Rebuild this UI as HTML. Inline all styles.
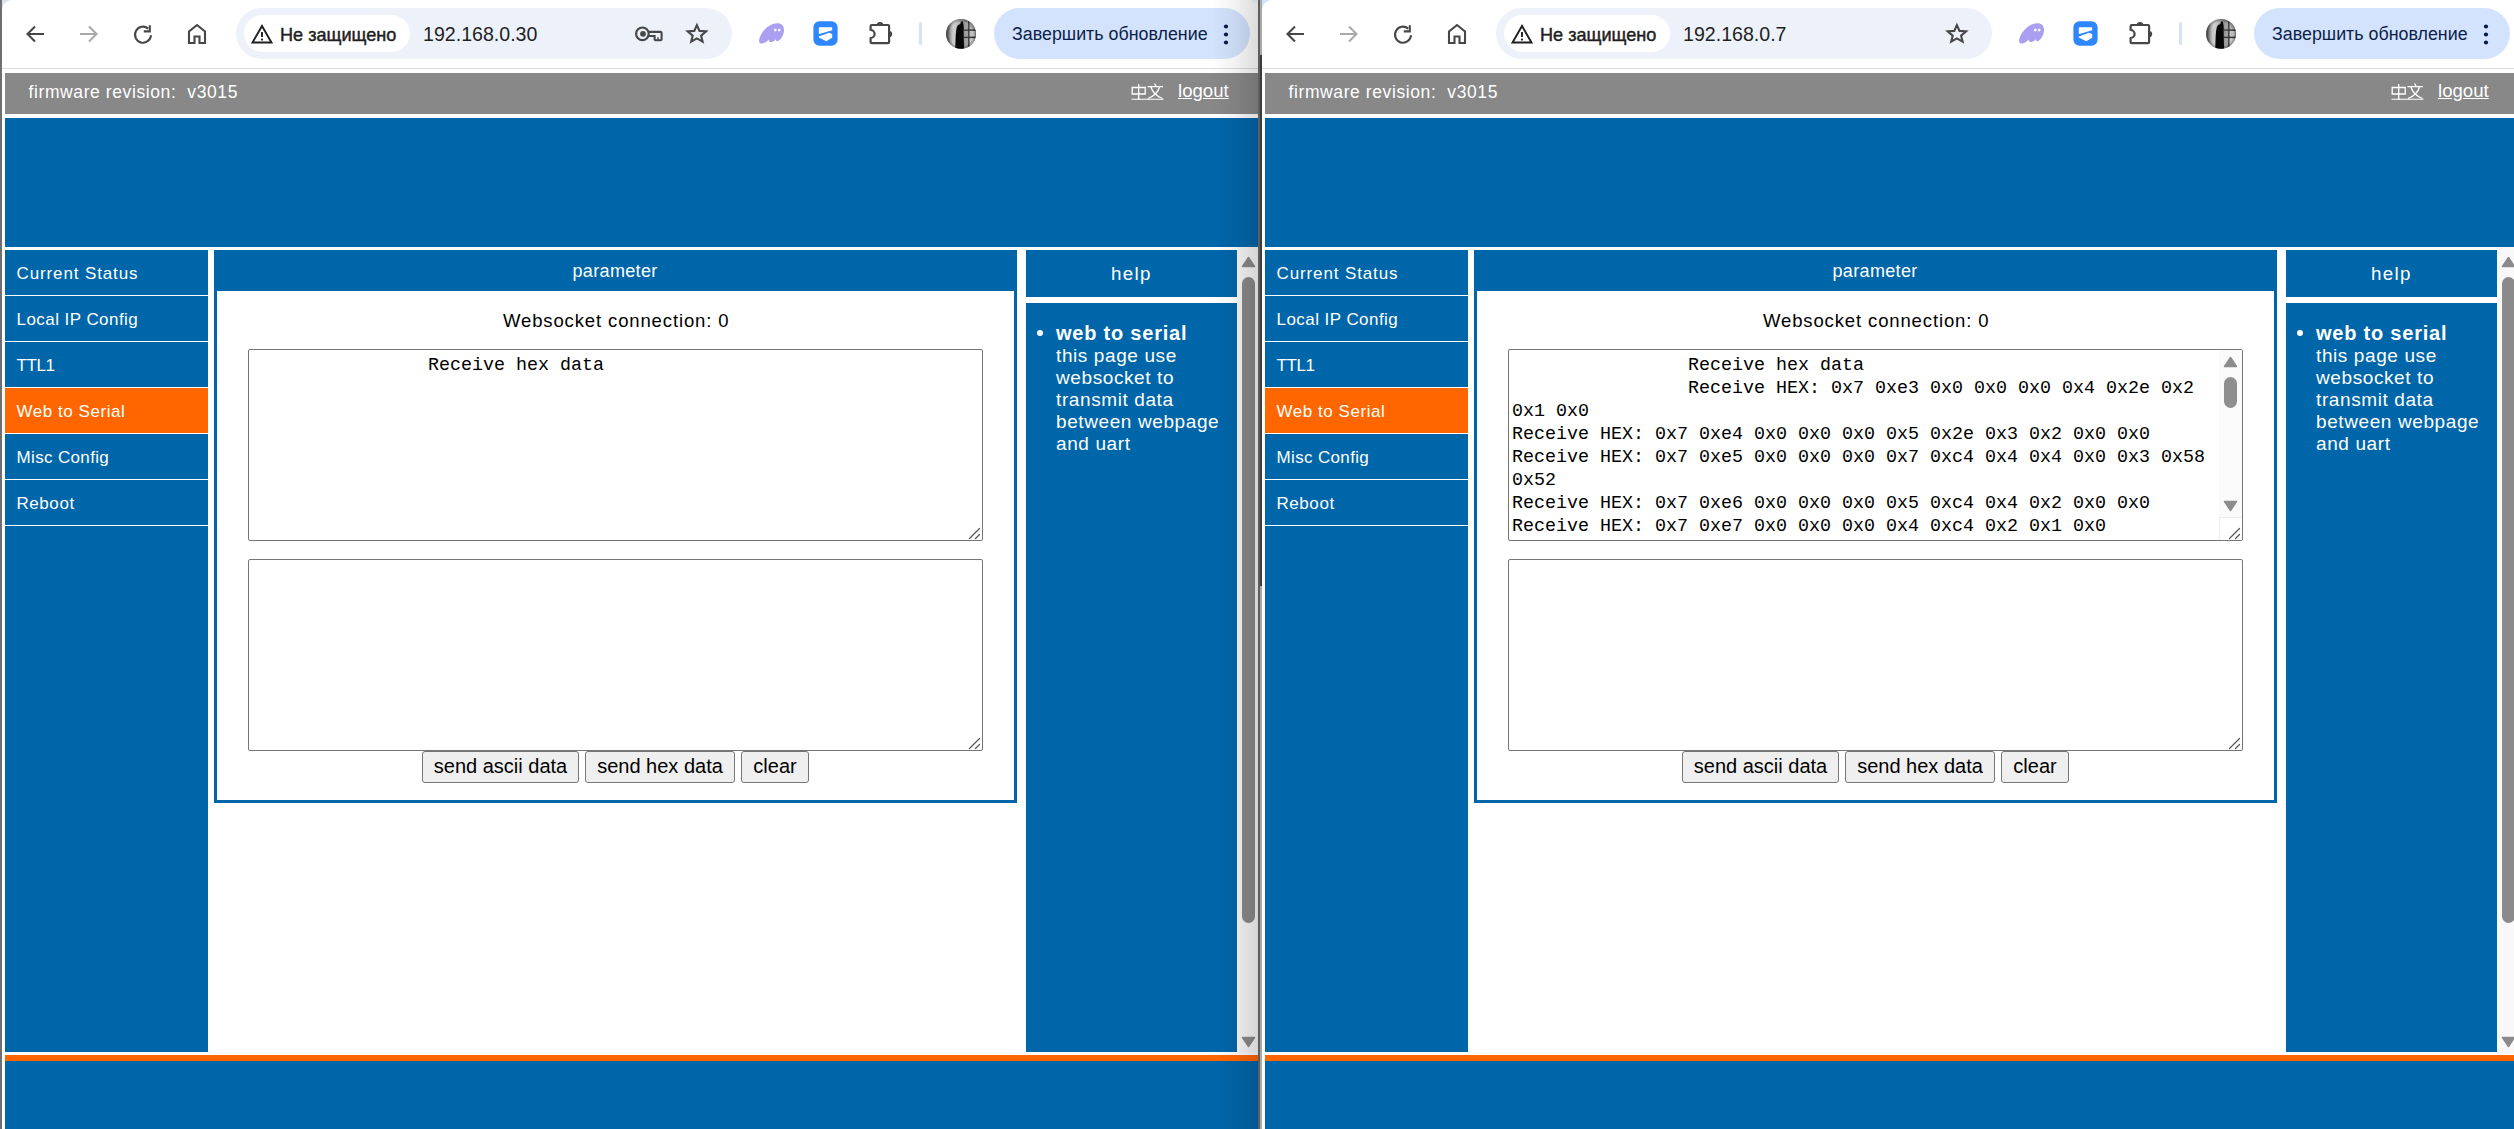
<!DOCTYPE html>
<html><head><meta charset="utf-8"><title>web to serial</title><style>
*{margin:0;padding:0}
html,body{width:2514px;height:1129px;overflow:hidden;background:#fff}
.win{position:absolute;top:0;height:1129px;overflow:hidden;background:#fff}
.ab{position:absolute}
.ic{position:absolute;display:block}
.t{position:absolute;white-space:nowrap;font-family:"Liberation Sans",sans-serif;line-height:1}
.pill{position:absolute;left:236px;top:8px;width:496px;height:51px;border-radius:25.5px;background:#edf2fa}
.chip{position:absolute;left:244px;top:15px;width:166px;height:37px;border-radius:18.5px;background:#fff}
.chiptext{left:280px;top:25.5px;font-size:18.1px;font-weight:400;-webkit-text-stroke:0.45px #1f1f1f;color:#1f1f1f}
.urltext{left:423px;top:24.5px;font-size:19.6px;color:#1f1f1f}
.upd{position:absolute;left:994px;top:8px;width:256px;height:51px;border-radius:25.5px;background:#d3e3fd}
.updtext{left:1012px;top:26px;font-size:17.85px;color:#0b1f4a}
.fw{left:28.5px;top:84px;font-size:17.5px;letter-spacing:0.6px;color:#fff}
.logout{left:1178px;top:82px;font-size:18.6px;color:#fff;text-decoration:underline}
.side{left:16.5px;font-size:17px;color:#fff;top:0}
.paramh{left:572.5px;top:262px;font-size:18px;letter-spacing:0.34px;color:#fff}
.ws{left:503px;top:312px;font-size:18.5px;letter-spacing:0.87px;color:#000}
.ta{position:absolute;left:248px;width:733px;height:190px;border:1px solid #767676;border-radius:2px;background:#fff}
.mono{left:252px;top:354px;font-family:"Liberation Mono",monospace;font-size:18.33px;line-height:23px;color:#000;white-space:pre}
.btn{position:absolute;top:751px;height:30px;border:1px solid #767676;border-radius:3px;background:#efefef;font-family:"Liberation Sans",sans-serif;font-size:20px;line-height:28px;text-align:center;color:#000}
.helph{left:1111px;top:265px;font-size:18.8px;letter-spacing:1.3px;color:#fff}
.helpt{left:1056px;top:323px;font-size:19px;letter-spacing:0.6px;line-height:21.9px;color:#fff}
.helpt b{font-size:20px;letter-spacing:0.78px}
</style></head>
<body>
<div class="win" style="left:0px;width:1258px">
<div class="ab" style="left:0;top:0;width:2px;height:1129px;background:#6f6f6f"></div>
<div class="ab" style="left:2px;top:68px;right:0;height:1px;background:#dcdcdc"></div>
<div class="ab" style="left:2px;top:0;width:12px;height:12px;background:#dde3ec"></div>
<div class="ab" style="left:2px;top:0;width:30px;height:30px;background:#fff;border-top-left-radius:10px"></div>
<svg class="ic" style="left:24px;top:22px" width="24" height="24" viewBox="0 0 24 24"><path d="M20 12H4M11 4.5L3.5 12L11 19.5" fill="none" stroke="#474747" stroke-width="2.1"/></svg>
<svg class="ic" style="left:76px;top:22px" width="24" height="24" viewBox="0 0 24 24"><path d="M4 12H20M13 4.5L20.5 12L13 19.5" fill="none" stroke="#a9a9a9" stroke-width="2.1"/></svg>
<svg class="ic" style="left:131px;top:22px" width="24" height="24" viewBox="0 0 24 24"><path d="M20 13.2A8 8 0 1 1 17.2 6.6" fill="none" stroke="#474747" stroke-width="2.1"/><path d="M18.8 3.2V9.4H12.8" fill="none" stroke="#474747" stroke-width="2.1"/></svg>
<svg class="ic" style="left:185px;top:22px" width="24" height="24" viewBox="0 0 24 24"><path d="M4 21V9.5L12 3L20 9.5V21H14.5V14.5H9.5V21Z" fill="none" stroke="#474747" stroke-width="2.1" stroke-linejoin="miter"/></svg>
<div class="pill"></div>
<div class="chip"></div>
<svg class="ic" style="left:251px;top:24px" width="22" height="20" viewBox="0 0 22 20"><path d="M11 2L20.5 18.5H1.5Z" fill="none" stroke="#1f1f1f" stroke-width="1.9" stroke-linejoin="miter"/><path d="M11 8V13" stroke="#1f1f1f" stroke-width="1.9"/><circle cx="11" cy="15.6" r="1.1" fill="#1f1f1f"/></svg>
<div class="t chiptext">Не защищено</div>
<svg class="ic" style="left:630px;top:20px" width="40" height="28" viewBox="630 20 40 28"><circle cx="642.4" cy="33.8" r="6.3" fill="none" stroke="#474747" stroke-width="2.2"/><circle cx="643" cy="33.8" r="2.9" fill="#474747"/><path d="M648.3 31.9H660.4Q661.6 31.9 661.6 33.1V39.2Q661.6 40.3 660.5 40.3H655.7Q654.6 40.3 654.6 39.2V36H648.3" fill="none" stroke="#474747" stroke-width="2.1"/><path d="M658 37.2V40" stroke="#474747" stroke-width="1.5"/></svg>
<svg class="ic" style="left:682px;top:19px" width="30" height="28" viewBox="682 19 30 28"><path d="M696.9 25.1L699.5 30.9L706.1 31.3L701.1 35.7L702.6 41.7L696.9 38.4L691.2 41.7L692.7 35.7L687.7 31.3L694.3 30.9Z" fill="none" stroke="#474747" stroke-width="2.1" stroke-linejoin="miter" stroke-miterlimit="10"/></svg>
<svg class="ic" style="left:755px;top:20px" width="32" height="27" viewBox="755 20 32 27"><path d="M760.5 43.4C757.8 42.3 759.3 37.2 762 33C765.5 27.5 771 23.4 777.5 23.2C782 23.1 784.6 26.5 783.9 31.5C783.3 35.6 781 39.6 778.2 40.9C776.7 41.6 775.9 40.6 775.6 39.3C774.1 41.6 771.6 42.6 769.9 41.9C769.1 41.5 769.1 40.6 768.9 39.6C766.6 42.1 763.1 44.2 760.5 43.4Z" fill="#ab9ff2"/><circle cx="775.3" cy="30.1" r="1.35" fill="#fff"/><circle cx="779.2" cy="30.1" r="1.35" fill="#fff"/></svg>
<svg class="ic" style="left:810px;top:18px" width="31" height="31" viewBox="810 18 31 31"><rect x="813.4" y="21.2" width="24.2" height="24.5" rx="6" fill="#2f87ff"/><path d="M819.6 27.2H831.6Q832.2 27.2 832.2 27.8V30.2L819.2 34.1Q818.8 34.2 818.8 33.8V28Q818.8 27.2 819.6 27.2Z" fill="#fff"/><path d="M818.8 36.4L829 32.7L832.2 34.1V37.8L826.3 41.2L818.8 37.5Z" fill="#fff"/></svg>
<svg class="ic" style="left:865px;top:17px" width="32" height="30" viewBox="865 17 32 30"><path d="M870.6 30V26.3Q870.6 25 871.9 25H888Q889.1 25 889.1 26.1V42.1Q889.1 43.2 888 43.2H871.9Q870.6 43.2 870.6 41.9V38A4 4 0 0 0 870.6 30Z" fill="none" stroke="#474747" stroke-width="2.2" stroke-linejoin="round"/><path d="M876.7 25.2A3.3 3.3 0 0 1 883.3 25.2Z" fill="#474747"/><path d="M889.1 30.9A3.1 3.1 0 0 1 889.1 37.1Z" fill="#474747"/></svg>
<div class="ab" style="left:918.5px;top:21.5px;width:3px;height:23.5px;background:#d3e3fd;border-radius:1.5px"></div>
<svg class="ic" style="left:944px;top:17px" width="34" height="34" viewBox="944 17 34 34"><defs><linearGradient id="avg" x1="0" y1="0" x2="1" y2="0"><stop offset="0" stop-color="#262626"/><stop offset="0.12" stop-color="#6a6a6a"/><stop offset="0.24" stop-color="#c4c4c4"/><stop offset="0.32" stop-color="#cfcfcf"/><stop offset="0.6" stop-color="#8a8a8a"/><stop offset="0.8" stop-color="#9a9a9a"/><stop offset="1" stop-color="#3a3a3a"/></linearGradient><radialGradient id="avr" cx="0.5" cy="0.5" r="0.5"><stop offset="0.7" stop-color="#000" stop-opacity="0"/><stop offset="1" stop-color="#000" stop-opacity="0.55"/></radialGradient><clipPath id="avc"><circle cx="961" cy="33.9" r="14.9"/></clipPath></defs><g clip-path="url(#avc)"><rect x="944" y="17" width="34" height="34" fill="url(#avg)"/><rect x="964.5" y="22" width="3.5" height="26" fill="#a0a0a0"/><rect x="969.5" y="22" width="6" height="7.5" fill="#b0b0b0"/><rect x="969.5" y="31" width="6" height="5.6" fill="#c0c0c0"/><rect x="969.5" y="38.4" width="6" height="9" fill="#cacaca"/><path d="M968.8 19V49M964 30.2H978M964 37.4H978" stroke="#333" stroke-width="1.2"/><path d="M955.2 50L955.6 38C956 31 956.4 28 957.6 25.8C958.5 24.6 959.8 24.4 960.5 24C960.3 22.6 960.9 21.3 961.9 21.2C962.9 21.3 963.3 22.4 963.1 23.6C963.6 24.6 963.8 27 963.7 30C963.6 36 963.9 42 964.2 50Z" fill="#080808"/><rect x="944" y="17" width="34" height="34" fill="url(#avr)"/></g></svg>
<div class="upd"></div>
<div class="t updtext">Завершить обновление</div>
<svg class="ic" style="left:1221px;top:23px" width="10" height="23" viewBox="0 0 10 23"><circle cx="5" cy="3.5" r="2.1" fill="#041e49"/><circle cx="5" cy="11.5" r="2.1" fill="#041e49"/><circle cx="5" cy="19.5" r="2.1" fill="#041e49"/></svg>
<div class="t urltext">192.168.0.30</div>
<div class="ab" style="left:5px;top:73px;width:1253px;height:41px;background:#888888"></div>
<div class="t fw">firmware revision:&nbsp; v3015</div>
<svg class="ic" style="left:1131px;top:83px" width="33" height="17" viewBox="0 0 33 17"><path d="M1.2 4.5H14.2V11H1.2Z M7.7 1V17" fill="none" stroke="#fff" stroke-width="1.3"/><path d="M23.5 0.5L25 3 M16.5 3.7H32 M20 4.2C21.5 9 25 13 31.5 15.5 M28.5 4.2C27 9 23.5 13 17 15.5" fill="none" stroke="#fff" stroke-width="1.3"/><path d="M0.5 16.3H32.5" stroke="#fff" stroke-width="1.1"/></svg>
<div class="t logout">logout</div>
<div class="ab" style="left:5px;top:118px;width:1253px;height:129px;background:#0066aa"></div>
<div class="ab" style="left:5px;top:250px;width:203px;height:802px;background:#0066aa"></div>
<div class="ab" style="left:5px;top:250px;width:203px;height:45px;background:#0066aa"></div>
<div class="ab" style="left:5px;top:295px;width:203px;height:1px;background:#fff"></div>
<div class="t side" style="top:265px;letter-spacing:0.88px">Current Status</div>
<div class="ab" style="left:5px;top:296px;width:203px;height:45px;background:#0066aa"></div>
<div class="ab" style="left:5px;top:341px;width:203px;height:1px;background:#fff"></div>
<div class="t side" style="top:311px;letter-spacing:0.45px">Local IP Config</div>
<div class="ab" style="left:5px;top:342px;width:203px;height:45px;background:#0066aa"></div>
<div class="ab" style="left:5px;top:387px;width:203px;height:1px;background:#fff"></div>
<div class="t side" style="top:357px;letter-spacing:-0.4px">TTL1</div>
<div class="ab" style="left:5px;top:388px;width:203px;height:45px;background:#ff6600"></div>
<div class="ab" style="left:5px;top:433px;width:203px;height:1px;background:#fff"></div>
<div class="t side" style="top:403px;letter-spacing:0.55px">Web to Serial</div>
<div class="ab" style="left:5px;top:434px;width:203px;height:45px;background:#0066aa"></div>
<div class="ab" style="left:5px;top:479px;width:203px;height:1px;background:#fff"></div>
<div class="t side" style="top:449px;letter-spacing:0.35px">Misc Config</div>
<div class="ab" style="left:5px;top:480px;width:203px;height:45px;background:#0066aa"></div>
<div class="ab" style="left:5px;top:525px;width:203px;height:1px;background:#fff"></div>
<div class="t side" style="top:495px;letter-spacing:0.56px">Reboot</div>
<div class="ab" style="left:214px;top:250px;width:797px;height:547px;border:3px solid #0066aa;background:#fff"></div>
<div class="ab" style="left:214px;top:250px;width:803px;height:41px;background:#0066aa"></div>
<div class="t paramh">parameter</div>
<div class="t ws">Websocket connection: 0</div>
<div class="ta" style="top:349px"></div>
<div class="t mono">                Receive hex data</div>
<svg class="ic" style="left:968px;top:527px" width="13" height="13" viewBox="0 0 13 13"><path d="M1.5 11.5L11.5 1.5M7.5 11.5L11.5 7.5" stroke="#5a5a5a" stroke-width="1.3" stroke-linecap="round"/></svg>
<div class="ta" style="top:559px"></div>
<svg class="ic" style="left:968px;top:737px" width="13" height="13" viewBox="0 0 13 13"><path d="M1.5 11.5L11.5 1.5M7.5 11.5L11.5 7.5" stroke="#5a5a5a" stroke-width="1.3" stroke-linecap="round"/></svg>
<div class="btn" style="left:422px;width:155px">send ascii data</div>
<div class="btn" style="left:585px;width:148px">send hex data</div>
<div class="btn" style="left:741px;width:66px">clear</div>
<div class="ab" style="left:1026px;top:250px;width:211px;height:47px;background:#0066aa"></div>
<div class="t helph">help</div>
<div class="ab" style="left:1026px;top:303px;width:211px;height:749px;background:#0066aa"></div>
<div class="ab" style="left:1037px;top:330px;width:6px;height:6px;border-radius:3px;background:#fff"></div>
<div class="t helpt"><b>web to serial</b><br>this page use<br>websocket to<br>transmit data<br>between webpage<br>and uart</div>
<div class="ab" style="left:1237px;top:247px;width:21px;height:806px;background:#f8f8f8"></div>
<svg class="ic" style="left:1241px;top:256px" width="15" height="12" viewBox="0 0 15 12"><path d="M7.5 1.5L13.5 10.5H1.5Z" fill="#8a8a8a" stroke="#8a8a8a" stroke-width="1.5" stroke-linejoin="round"/></svg>
<div class="ab" style="left:1242px;top:277px;width:13px;height:646px;background:#8a8a8a;border-radius:6.5px"></div>
<svg class="ic" style="left:1241px;top:1036px" width="15" height="12" viewBox="0 0 15 12"><path d="M7.5 10.5L13.5 1.5H1.5Z" fill="#8a8a8a" stroke="#8a8a8a" stroke-width="1.5" stroke-linejoin="round"/></svg>
<div class="ab" style="left:5px;top:1055px;width:1253px;height:6px;background:#ff6600"></div>
<div class="ab" style="left:5px;top:1061px;width:1253px;height:68px;background:#0066aa"></div>
<div class="ab" style="left:1212px;top:0;width:46px;height:1129px;background:linear-gradient(to right,rgba(0,0,0,0),rgba(0,0,0,0.05) 50%,rgba(0,0,0,0.14))"></div>
</div>
<div class="win" style="left:1260px;width:1254px">
<div class="ab" style="left:0;top:0;width:2px;height:1129px;background:#a9a9a9"></div>
<div class="ab" style="left:2px;top:68px;right:0;height:1px;background:#dcdcdc"></div>
<div class="ab" style="left:2px;top:0;width:12px;height:12px;background:#d3e3fd"></div>
<div class="ab" style="left:2px;top:0;width:30px;height:30px;background:#fff;border-top-left-radius:10px"></div>
<svg class="ic" style="left:24px;top:22px" width="24" height="24" viewBox="0 0 24 24"><path d="M20 12H4M11 4.5L3.5 12L11 19.5" fill="none" stroke="#474747" stroke-width="2.1"/></svg>
<svg class="ic" style="left:76px;top:22px" width="24" height="24" viewBox="0 0 24 24"><path d="M4 12H20M13 4.5L20.5 12L13 19.5" fill="none" stroke="#a9a9a9" stroke-width="2.1"/></svg>
<svg class="ic" style="left:131px;top:22px" width="24" height="24" viewBox="0 0 24 24"><path d="M20 13.2A8 8 0 1 1 17.2 6.6" fill="none" stroke="#474747" stroke-width="2.1"/><path d="M18.8 3.2V9.4H12.8" fill="none" stroke="#474747" stroke-width="2.1"/></svg>
<svg class="ic" style="left:185px;top:22px" width="24" height="24" viewBox="0 0 24 24"><path d="M4 21V9.5L12 3L20 9.5V21H14.5V14.5H9.5V21Z" fill="none" stroke="#474747" stroke-width="2.1" stroke-linejoin="miter"/></svg>
<div class="pill"></div>
<div class="chip"></div>
<svg class="ic" style="left:251px;top:24px" width="22" height="20" viewBox="0 0 22 20"><path d="M11 2L20.5 18.5H1.5Z" fill="none" stroke="#1f1f1f" stroke-width="1.9" stroke-linejoin="miter"/><path d="M11 8V13" stroke="#1f1f1f" stroke-width="1.9"/><circle cx="11" cy="15.6" r="1.1" fill="#1f1f1f"/></svg>
<div class="t chiptext">Не защищено</div>
<svg class="ic" style="left:682px;top:19px" width="30" height="28" viewBox="682 19 30 28"><path d="M696.9 25.1L699.5 30.9L706.1 31.3L701.1 35.7L702.6 41.7L696.9 38.4L691.2 41.7L692.7 35.7L687.7 31.3L694.3 30.9Z" fill="none" stroke="#474747" stroke-width="2.1" stroke-linejoin="miter" stroke-miterlimit="10"/></svg>
<svg class="ic" style="left:755px;top:20px" width="32" height="27" viewBox="755 20 32 27"><path d="M760.5 43.4C757.8 42.3 759.3 37.2 762 33C765.5 27.5 771 23.4 777.5 23.2C782 23.1 784.6 26.5 783.9 31.5C783.3 35.6 781 39.6 778.2 40.9C776.7 41.6 775.9 40.6 775.6 39.3C774.1 41.6 771.6 42.6 769.9 41.9C769.1 41.5 769.1 40.6 768.9 39.6C766.6 42.1 763.1 44.2 760.5 43.4Z" fill="#ab9ff2"/><circle cx="775.3" cy="30.1" r="1.35" fill="#fff"/><circle cx="779.2" cy="30.1" r="1.35" fill="#fff"/></svg>
<svg class="ic" style="left:810px;top:18px" width="31" height="31" viewBox="810 18 31 31"><rect x="813.4" y="21.2" width="24.2" height="24.5" rx="6" fill="#2f87ff"/><path d="M819.6 27.2H831.6Q832.2 27.2 832.2 27.8V30.2L819.2 34.1Q818.8 34.2 818.8 33.8V28Q818.8 27.2 819.6 27.2Z" fill="#fff"/><path d="M818.8 36.4L829 32.7L832.2 34.1V37.8L826.3 41.2L818.8 37.5Z" fill="#fff"/></svg>
<svg class="ic" style="left:865px;top:17px" width="32" height="30" viewBox="865 17 32 30"><path d="M870.6 30V26.3Q870.6 25 871.9 25H888Q889.1 25 889.1 26.1V42.1Q889.1 43.2 888 43.2H871.9Q870.6 43.2 870.6 41.9V38A4 4 0 0 0 870.6 30Z" fill="none" stroke="#474747" stroke-width="2.2" stroke-linejoin="round"/><path d="M876.7 25.2A3.3 3.3 0 0 1 883.3 25.2Z" fill="#474747"/><path d="M889.1 30.9A3.1 3.1 0 0 1 889.1 37.1Z" fill="#474747"/></svg>
<div class="ab" style="left:918.5px;top:21.5px;width:3px;height:23.5px;background:#d3e3fd;border-radius:1.5px"></div>
<svg class="ic" style="left:944px;top:17px" width="34" height="34" viewBox="944 17 34 34"><defs><linearGradient id="avg" x1="0" y1="0" x2="1" y2="0"><stop offset="0" stop-color="#262626"/><stop offset="0.12" stop-color="#6a6a6a"/><stop offset="0.24" stop-color="#c4c4c4"/><stop offset="0.32" stop-color="#cfcfcf"/><stop offset="0.6" stop-color="#8a8a8a"/><stop offset="0.8" stop-color="#9a9a9a"/><stop offset="1" stop-color="#3a3a3a"/></linearGradient><radialGradient id="avr" cx="0.5" cy="0.5" r="0.5"><stop offset="0.7" stop-color="#000" stop-opacity="0"/><stop offset="1" stop-color="#000" stop-opacity="0.55"/></radialGradient><clipPath id="avc"><circle cx="961" cy="33.9" r="14.9"/></clipPath></defs><g clip-path="url(#avc)"><rect x="944" y="17" width="34" height="34" fill="url(#avg)"/><rect x="964.5" y="22" width="3.5" height="26" fill="#a0a0a0"/><rect x="969.5" y="22" width="6" height="7.5" fill="#b0b0b0"/><rect x="969.5" y="31" width="6" height="5.6" fill="#c0c0c0"/><rect x="969.5" y="38.4" width="6" height="9" fill="#cacaca"/><path d="M968.8 19V49M964 30.2H978M964 37.4H978" stroke="#333" stroke-width="1.2"/><path d="M955.2 50L955.6 38C956 31 956.4 28 957.6 25.8C958.5 24.6 959.8 24.4 960.5 24C960.3 22.6 960.9 21.3 961.9 21.2C962.9 21.3 963.3 22.4 963.1 23.6C963.6 24.6 963.8 27 963.7 30C963.6 36 963.9 42 964.2 50Z" fill="#080808"/><rect x="944" y="17" width="34" height="34" fill="url(#avr)"/></g></svg>
<div class="upd"></div>
<div class="t updtext">Завершить обновление</div>
<svg class="ic" style="left:1221px;top:23px" width="10" height="23" viewBox="0 0 10 23"><circle cx="5" cy="3.5" r="2.1" fill="#041e49"/><circle cx="5" cy="11.5" r="2.1" fill="#041e49"/><circle cx="5" cy="19.5" r="2.1" fill="#041e49"/></svg>
<div class="t urltext">192.168.0.7</div>
<div class="ab" style="left:5px;top:73px;width:1253px;height:41px;background:#888888"></div>
<div class="t fw">firmware revision:&nbsp; v3015</div>
<svg class="ic" style="left:1131px;top:83px" width="33" height="17" viewBox="0 0 33 17"><path d="M1.2 4.5H14.2V11H1.2Z M7.7 1V17" fill="none" stroke="#fff" stroke-width="1.3"/><path d="M23.5 0.5L25 3 M16.5 3.7H32 M20 4.2C21.5 9 25 13 31.5 15.5 M28.5 4.2C27 9 23.5 13 17 15.5" fill="none" stroke="#fff" stroke-width="1.3"/><path d="M0.5 16.3H32.5" stroke="#fff" stroke-width="1.1"/></svg>
<div class="t logout">logout</div>
<div class="ab" style="left:5px;top:118px;width:1253px;height:129px;background:#0066aa"></div>
<div class="ab" style="left:5px;top:250px;width:203px;height:802px;background:#0066aa"></div>
<div class="ab" style="left:5px;top:250px;width:203px;height:45px;background:#0066aa"></div>
<div class="ab" style="left:5px;top:295px;width:203px;height:1px;background:#fff"></div>
<div class="t side" style="top:265px;letter-spacing:0.88px">Current Status</div>
<div class="ab" style="left:5px;top:296px;width:203px;height:45px;background:#0066aa"></div>
<div class="ab" style="left:5px;top:341px;width:203px;height:1px;background:#fff"></div>
<div class="t side" style="top:311px;letter-spacing:0.45px">Local IP Config</div>
<div class="ab" style="left:5px;top:342px;width:203px;height:45px;background:#0066aa"></div>
<div class="ab" style="left:5px;top:387px;width:203px;height:1px;background:#fff"></div>
<div class="t side" style="top:357px;letter-spacing:-0.4px">TTL1</div>
<div class="ab" style="left:5px;top:388px;width:203px;height:45px;background:#ff6600"></div>
<div class="ab" style="left:5px;top:433px;width:203px;height:1px;background:#fff"></div>
<div class="t side" style="top:403px;letter-spacing:0.55px">Web to Serial</div>
<div class="ab" style="left:5px;top:434px;width:203px;height:45px;background:#0066aa"></div>
<div class="ab" style="left:5px;top:479px;width:203px;height:1px;background:#fff"></div>
<div class="t side" style="top:449px;letter-spacing:0.35px">Misc Config</div>
<div class="ab" style="left:5px;top:480px;width:203px;height:45px;background:#0066aa"></div>
<div class="ab" style="left:5px;top:525px;width:203px;height:1px;background:#fff"></div>
<div class="t side" style="top:495px;letter-spacing:0.56px">Reboot</div>
<div class="ab" style="left:214px;top:250px;width:797px;height:547px;border:3px solid #0066aa;background:#fff"></div>
<div class="ab" style="left:214px;top:250px;width:803px;height:41px;background:#0066aa"></div>
<div class="t paramh">parameter</div>
<div class="t ws">Websocket connection: 0</div>
<div class="ta" style="top:349px"></div>
<div class="t mono">                Receive hex data
                Receive HEX: 0x7 0xe3 0x0 0x0 0x0 0x4 0x2e 0x2
0x1 0x0
Receive HEX: 0x7 0xe4 0x0 0x0 0x0 0x5 0x2e 0x3 0x2 0x0 0x0
Receive HEX: 0x7 0xe5 0x0 0x0 0x0 0x7 0xc4 0x4 0x4 0x0 0x3 0x58
0x52
Receive HEX: 0x7 0xe6 0x0 0x0 0x0 0x5 0xc4 0x4 0x2 0x0 0x0
Receive HEX: 0x7 0xe7 0x0 0x0 0x0 0x4 0xc4 0x2 0x1 0x0</div>
<div class="ab" style="left:959px;top:350px;width:23px;height:190px;background:#fafafa"></div>
<svg class="ic" style="left:963px;top:356px" width="15" height="12" viewBox="0 0 15 12"><path d="M7.5 1.5L13.5 10.5H1.5Z" fill="#8c8c8c" stroke="#8c8c8c" stroke-width="1.5" stroke-linejoin="round"/></svg>
<div class="ab" style="left:964px;top:377px;width:13px;height:31px;background:#8f8f8f;border-radius:6.5px"></div>
<svg class="ic" style="left:963px;top:500px" width="15" height="12" viewBox="0 0 15 12"><path d="M7.5 10.5L13.5 1.5H1.5Z" fill="#8c8c8c" stroke="#8c8c8c" stroke-width="1.5" stroke-linejoin="round"/></svg>
<div class="ab" style="left:959px;top:517px;width:23px;height:23px;background:#fff;border-left:1px solid #eee;border-top:1px solid #eee;box-sizing:border-box"></div>
<svg class="ic" style="left:968px;top:527px" width="13" height="13" viewBox="0 0 13 13"><path d="M1.5 11.5L11.5 1.5M7.5 11.5L11.5 7.5" stroke="#5a5a5a" stroke-width="1.3" stroke-linecap="round"/></svg>
<div class="ta" style="top:559px"></div>
<svg class="ic" style="left:968px;top:737px" width="13" height="13" viewBox="0 0 13 13"><path d="M1.5 11.5L11.5 1.5M7.5 11.5L11.5 7.5" stroke="#5a5a5a" stroke-width="1.3" stroke-linecap="round"/></svg>
<div class="btn" style="left:422px;width:155px">send ascii data</div>
<div class="btn" style="left:585px;width:148px">send hex data</div>
<div class="btn" style="left:741px;width:66px">clear</div>
<div class="ab" style="left:1026px;top:250px;width:211px;height:47px;background:#0066aa"></div>
<div class="t helph">help</div>
<div class="ab" style="left:1026px;top:303px;width:211px;height:749px;background:#0066aa"></div>
<div class="ab" style="left:1037px;top:330px;width:6px;height:6px;border-radius:3px;background:#fff"></div>
<div class="t helpt"><b>web to serial</b><br>this page use<br>websocket to<br>transmit data<br>between webpage<br>and uart</div>
<div class="ab" style="left:1237px;top:247px;width:21px;height:806px;background:#f8f8f8"></div>
<svg class="ic" style="left:1241px;top:256px" width="15" height="12" viewBox="0 0 15 12"><path d="M7.5 1.5L13.5 10.5H1.5Z" fill="#8a8a8a" stroke="#8a8a8a" stroke-width="1.5" stroke-linejoin="round"/></svg>
<div class="ab" style="left:1242px;top:277px;width:13px;height:646px;background:#8a8a8a;border-radius:6.5px"></div>
<svg class="ic" style="left:1241px;top:1036px" width="15" height="12" viewBox="0 0 15 12"><path d="M7.5 10.5L13.5 1.5H1.5Z" fill="#8a8a8a" stroke="#8a8a8a" stroke-width="1.5" stroke-linejoin="round"/></svg>
<div class="ab" style="left:5px;top:1055px;width:1253px;height:6px;background:#ff6600"></div>
<div class="ab" style="left:5px;top:1061px;width:1253px;height:68px;background:#0066aa"></div>
</div>
<div class="ab" style="left:1258px;top:0;width:2px;height:1129px;background:#5e5e5e"></div>
<div class="ab" style="left:1260px;top:55px;width:2px;height:531px;background:#3c3c3c"></div>
<div class="ab" style="left:1252px;top:0;width:6px;height:5px;background:linear-gradient(to bottom,#cfd5de,rgba(207,213,222,0));border-bottom-left-radius:6px"></div>
</body></html>
